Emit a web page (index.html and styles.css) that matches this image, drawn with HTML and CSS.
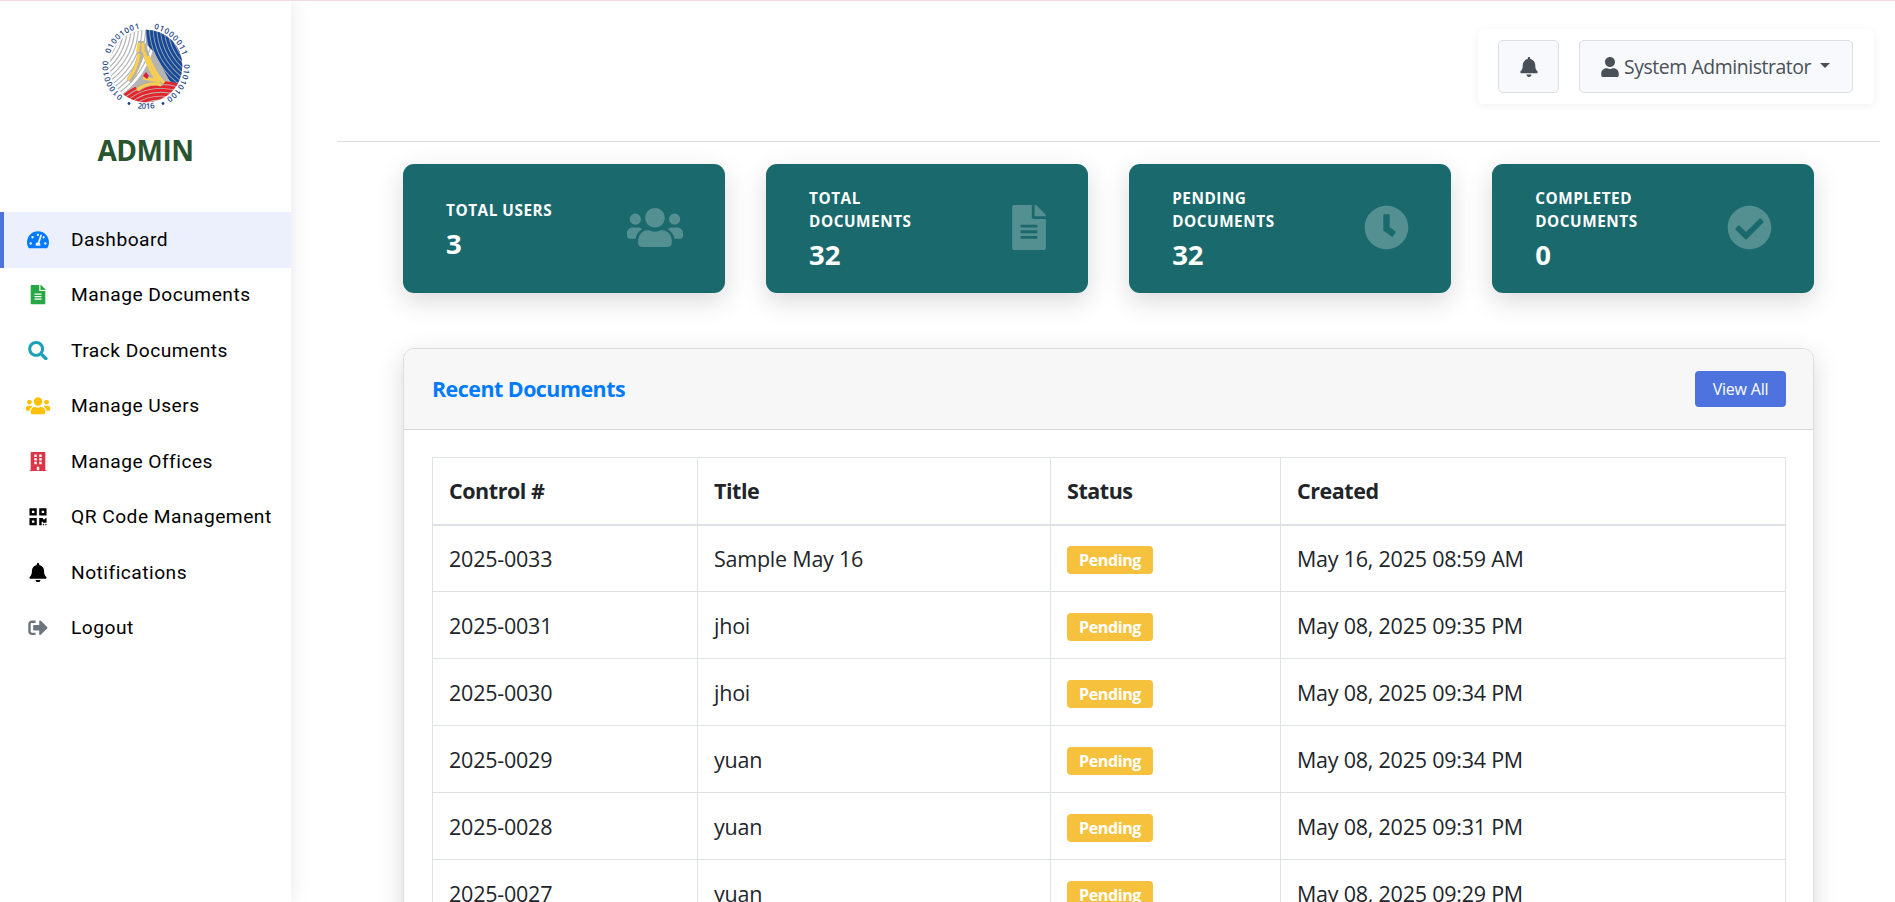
FILE: index.html
```html
<!DOCTYPE html>
<html lang="en">
<head>
<meta charset="utf-8">
<title>Admin Dashboard</title>
<link rel="stylesheet" href="styles.css">
</head>
<body>
<svg class="sprite" aria-hidden="true">
  <symbol id="i-dash" viewBox="0 0 576 512"><path d="M288 32C128.94 32 0 160.94 0 320c0 52.8 14.25 102.26 39.06 144.8 5.61 9.62 16.3 15.2 27.44 15.2h443c11.14 0 21.83-5.58 27.44-15.2C561.75 422.26 576 372.8 576 320c0-159.06-128.94-288-288-288zm0 64c14.71 0 26.58 10.13 30.32 23.65-1.11 2.26-2.64 4.23-3.45 6.67l-9.22 27.67c-5.13 3.49-10.97 6.01-17.64 6.01-17.67 0-32-14.33-32-32S270.33 96 288 96zM96 384c-17.67 0-32-14.33-32-32s14.33-32 32-32 32 14.33 32 32-14.33 32-32 32zm48-160c-17.67 0-32-14.33-32-32s14.33-32 32-32 32 14.33 32 32-14.33 32-32 32zm246.77-72.41l-61.33 184C343.13 347.33 352 364.54 352 384c0 11.72-3.38 22.55-8.88 32H232.88c-5.5-9.45-8.88-20.28-8.88-32 0-33.94 26.5-61.43 59.9-63.59l61.34-184.01c4.17-12.56 17.73-19.45 30.36-15.17 12.57 4.19 19.35 17.79 15.17 30.36zm14.66 57.2l15.52-46.55c3.47-1.29 7.13-2.23 11.05-2.23 17.67 0 32 14.33 32 32s-14.33 32-32 32c-11.38-.01-20.89-6.28-26.57-15.22zM480 384c-17.67 0-32-14.33-32-32s14.33-32 32-32 32 14.33 32 32-14.33 32-32 32z"/></symbol>
  <symbol id="i-file" viewBox="0 0 384 512"><path d="M224 136V0H24C10.7 0 0 10.7 0 24v464c0 13.3 10.7 24 24 24h336c13.3 0 24-10.7 24-24V160H248c-13.2 0-24-10.8-24-24zm64 236c0 6.6-5.4 12-12 12H108c-6.6 0-12-5.4-12-12v-8c0-6.6 5.4-12 12-12h168c6.6 0 12 5.4 12 12v8zm0-64c0 6.6-5.4 12-12 12H108c-6.6 0-12-5.4-12-12v-8c0-6.6 5.4-12 12-12h168c6.6 0 12 5.4 12 12v8zm0-72v8c0 6.6-5.4 12-12 12H108c-6.6 0-12-5.4-12-12v-8c0-6.6 5.4-12 12-12h168c6.6 0 12 5.4 12 12zm96-114.1v6.1H256V0h6.1c6.4 0 12.5 2.5 17 7l97.9 98c4.5 4.5 7 10.6 7 16.9z"/></symbol>
  <symbol id="i-search" viewBox="0 0 512 512"><path d="M505 442.7L405.3 343c-4.5-4.5-10.6-7-17-7H372c27.6-35.3 44-79.7 44-128C416 93.1 322.9 0 208 0S0 93.1 0 208s93.1 208 208 208c48.3 0 92.7-16.4 128-44v16.3c0 6.4 2.5 12.5 7 17l99.7 99.7c9.4 9.4 24.6 9.4 33.9 0l28.3-28.3c9.4-9.4 9.4-24.6.1-34zM208 336c-70.7 0-128-57.2-128-128 0-70.7 57.2-128 128-128 70.7 0 128 57.2 128 128 0 70.7-57.2 128-128 128z"/></symbol>
  <symbol id="i-users" viewBox="0 0 640 512"><path d="M96 224c35.3 0 64-28.7 64-64s-28.7-64-64-64-64 28.7-64 64 28.7 64 64 64zm448 0c35.3 0 64-28.7 64-64s-28.7-64-64-64-64 28.7-64 64 28.7 64 64 64zm32 32h-64c-17.6 0-33.5 7.1-45.1 18.6 40.3 22.1 68.9 62 75.1 109.4h66c17.7 0 32-14.3 32-32v-32c0-35.3-28.7-64-64-64zm-256 0c61.9 0 112-50.1 112-112S381.9 32 320 32 208 82.1 208 144s50.1 112 112 112zm76.8 32h-8.3c-20.8 10-43.9 16-68.5 16s-47.6-6-68.5-16h-8.3C179.6 288 128 339.6 128 403.2V432c0 26.5 21.5 48 48 48h288c26.5 0 48-21.5 48-48v-28.8c0-63.6-51.6-115.2-115.2-115.2zm-223.7-13.4C161.5 263.1 145.6 256 128 256H64c-35.3 0-64 28.7-64 64v32c0 17.7 14.3 32 32 32h65.9c6.3-47.4 34.9-87.3 75.2-109.4z"/></symbol>
  <symbol id="i-building" viewBox="0 0 448 512"><path fill-rule="evenodd" d="M436 480h-20V24c0-13.3-10.7-24-24-24H56C42.7 0 32 10.7 32 24v456H12c-6.6 0-12 5.4-12 12v20h448v-20c0-6.6-5.4-12-12-12zM128 64h64v64h-64zM256 64h64v64h-64zM128 160h64v64h-64zM256 160h64v64h-64zM128 256h64v64h-64zM256 256h64v64h-64zM192 384h64v96h-64z"/></symbol>
  <symbol id="i-qr" viewBox="0 0 448 512"><path d="M0 224h192V32H0v192zM64 96h64v64H64V96zm192-64v192h192V32H256zm128 128h-64V96h64v64zM0 480h192V288H0v192zm64-128h64v64H64v-64zm352-64h32v128h-96v-32h-32v96h-64V288h96v32h64v-32zm0 160h32v32h-32v-32zm-64 0h32v32h-32v-32z"/></symbol>
  <symbol id="i-bell" viewBox="0 0 448 512"><path d="M224 512c35.32 0 63.97-28.65 63.97-64H160.03c0 35.35 28.65 64 63.97 64zm215.39-149.71c-19.32-20.76-55.47-51.99-55.47-154.29 0-77.7-54.48-139.9-127.94-155.16V32c0-17.67-14.32-32-31.98-32s-31.98 14.33-31.98 32v20.84C118.56 68.1 64.08 130.3 64.08 208c0 102.3-36.15 133.53-55.47 154.29-6 6.45-8.66 14.16-8.61 21.71.11 16.4 12.98 32 32.1 32h383.8c19.12 0 32-15.6 32.1-32 .05-7.55-2.61-15.27-8.61-21.71z"/></symbol>
  <symbol id="i-out" viewBox="0 0 512 512"><path d="M497 273L329 441c-15 15-41 4.5-41-17v-96H152c-13.3 0-24-10.7-24-24v-96c0-13.3 10.7-24 24-24h136V88c0-21.4 25.9-32 41-17l168 168c9.3 9.4 9.3 24.6 0 34zM192 436v-40c0-6.6-5.4-12-12-12H96c-17.7 0-32-14.3-32-32V160c0-17.7 14.3-32 32-32h84c6.6 0 12-5.4 12-12V76c0-6.6-5.4-12-12-12H96c-53 0-96 43-96 96v192c0 53 43 96 96 96h84c6.6 0 12-5.4 12-12z"/></symbol>
  <symbol id="i-user" viewBox="0 0 448 512"><path d="M224 256c70.7 0 128-57.3 128-128S294.7 0 224 0 96 57.3 96 128s57.3 128 128 128zm89.6 32h-16.7c-22.2 10.2-46.9 16-72.9 16s-50.6-5.8-72.9-16h-16.7C60.2 288 0 348.2 0 422.4V464c0 26.5 21.5 48 48 48h352c26.5 0 48-21.5 48-48v-41.6c0-74.2-60.2-134.4-134.4-134.4z"/></symbol>
  <symbol id="i-clock" viewBox="0 0 512 512"><path d="M256 8C119 8 8 119 8 256s111 248 248 248 248-111 248-248S393 8 256 8zm57.1 350.1L224.9 294c-3.1-2.3-4.9-5.9-4.9-9.7V116c0-6.6 5.4-12 12-12h48c6.6 0 12 5.4 12 12v137.7l63.5 46.2c5.4 3.9 6.5 11.4 2.6 16.8l-28.2 38.8c-3.9 5.3-11.4 6.5-16.8 2.6z"/></symbol>
  <symbol id="i-check" viewBox="0 0 512 512"><path d="M504 256c0 136.967-111.033 248-248 248S8 392.967 8 256 119.033 8 256 8s248 111.033 248 248zM227.314 387.314l184-184c6.248-6.248 6.248-16.379 0-22.627l-22.627-22.627c-6.248-6.249-16.379-6.249-22.628 0L216 308.118l-70.059-70.059c-6.248-6.248-16.379-6.248-22.628 0l-22.627 22.627c-6.248 6.248-6.248 16.379 0 22.627l104 104c6.249 6.249 16.379 6.249 22.628.001z"/></symbol>
</svg>

<div class="app">
  <aside class="sidebar">
    <div class="brand">
      <svg class="logo" viewBox="-45 -45 90 90">
        <defs>
          <clipPath id="disc"><circle r="36.3"/></clipPath>
          <clipPath id="blueArea"><path d="M0-40V-22L8-14 27 21 45 20V-45H0z"/></clipPath>
          <clipPath id="redArea"><circle cx="15" cy="75" r="60"/></clipPath>
          <path id="ring" d="M0 38A38 38 0 0 1 0-38A38 38 0 0 1 0 38"/>
          <path id="ringUnder" d="M-43 0A43 43 0 0 0 43 0"/>
        </defs>
        <g clip-path="url(#disc)">
          <circle r="37" fill="#b4b4b4"/>
          <g class="arcs arcs-white">
            <circle cx="-75" cy="-40" r="73"/><circle cx="-75" cy="-40" r="69.3"/><circle cx="-75" cy="-40" r="65.6"/><circle cx="-75" cy="-40" r="61.9"/><circle cx="-75" cy="-40" r="58.2"/><circle cx="-75" cy="-40" r="54.5"/><circle cx="-75" cy="-40" r="50.8"/><circle cx="-75" cy="-40" r="47.1"/><circle cx="-75" cy="-40" r="43.4"/><circle cx="-75" cy="-40" r="76.7"/><circle cx="-75" cy="-40" r="80.4"/><circle cx="-75" cy="-40" r="84.1"/>
          </g>
          <g clip-path="url(#blueArea)">
            <rect x="-1" y="-40" width="50" height="70" fill="#9aa5b5"/>
            <g class="arcs arcs-blue">
              <circle cx="75" cy="-40" r="73.5"/><circle cx="75" cy="-40" r="69.8"/><circle cx="75" cy="-40" r="66.1"/><circle cx="75" cy="-40" r="62.4"/><circle cx="75" cy="-40" r="58.7"/><circle cx="75" cy="-40" r="55"/><circle cx="75" cy="-40" r="51.3"/><circle cx="75" cy="-40" r="47.6"/><circle cx="75" cy="-40" r="43.9"/>
            </g>
          </g>
          <g clip-path="url(#redArea)">
            <circle cx="15" cy="75" r="60" fill="#c4b5b5"/>
            <g class="arcs arcs-red">
              <circle cx="15" cy="75" r="58.5"/><circle cx="15" cy="75" r="54.6"/><circle cx="15" cy="75" r="50.7"/><circle cx="15" cy="75" r="46.8"/><circle cx="15" cy="75" r="42.9"/><circle cx="15" cy="75" r="39"/>
            </g>
          </g>
          <path class="star-edge" d="M-5-25V-14Q-8 2-17 15M-3-22Q4 6 17 18M17 17Q4 14-9 23"/>
          <path class="star" d="M-7-23L-8.500-14M-3-23V-14M-7-12Q-9 3-18 14M-2-14Q3 5 13 16M2-10Q9 8 18 17M15 19Q3 15-9 24M-3 12L14 15"/>
          <path d="M-3 10L0 6L3 10L1 13z" fill="#e0203c"/>
        </g>
        <g class="ring-text">
          <text><textPath href="#ring" startOffset="24.500" textLength="40">01000100</textPath></text>
          <text><textPath href="#ring" startOffset="72" textLength="41">01001001</textPath></text>
          <text><textPath href="#ring" startOffset="127" textLength="41">01000011</textPath></text>
          <text><textPath href="#ring" startOffset="177" textLength="40">01010100</textPath></text>
          <text text-anchor="middle"><textPath href="#ringUnder" startOffset="50%">2016</textPath></text>
        </g>
        <circle cx="-17" cy="37.5" r="1.4" fill="#1c4587"/><circle cx="17" cy="37.5" r="1.4" fill="#1c4587"/>
      </svg>
      <h1 class="brand-name">ADMIN</h1>
    </div>
    <nav class="nav">
      <a class="nav-item active"><svg class="icon blue"><use href="#i-dash"/></svg><span>Dashboard</span></a>
      <a class="nav-item"><svg class="icon green"><use href="#i-file"/></svg><span>Manage Documents</span></a>
      <a class="nav-item"><svg class="icon cyan"><use href="#i-search"/></svg><span>Track Documents</span></a>
      <a class="nav-item"><svg class="icon yellow"><use href="#i-users"/></svg><span>Manage Users</span></a>
      <a class="nav-item"><svg class="icon red"><use href="#i-building"/></svg><span>Manage Offices</span></a>
      <a class="nav-item"><svg class="icon"><use href="#i-qr"/></svg><span>QR Code Management</span></a>
      <a class="nav-item"><svg class="icon"><use href="#i-bell"/></svg><span>Notifications</span></a>
      <a class="nav-item"><svg class="icon gray"><use href="#i-out"/></svg><span>Logout</span></a>
    </nav>
  </aside>

  <main class="main">
    <header class="topbar">
      <div class="toolbar">
        <button class="tool bell"><svg class="tool-icon"><use href="#i-bell"/></svg></button>
        <button class="tool account"><svg class="tool-icon"><use href="#i-user"/></svg><span class="account-name">System Administrator</span><i class="caret"></i></button>
      </div>
    </header>

    <div class="content">
      <section class="stats">
        <div class="stat"><div class="stat-text"><div class="stat-label">TOTAL USERS</div><div class="stat-value">3</div></div><svg class="stat-icon wide"><use href="#i-users"/></svg></div>
        <div class="stat"><div class="stat-text"><div class="stat-label">TOTAL<br>DOCUMENTS</div><div class="stat-value">32</div></div><svg class="stat-icon narrow"><use href="#i-file"/></svg></div>
        <div class="stat"><div class="stat-text"><div class="stat-label">PENDING<br>DOCUMENTS</div><div class="stat-value">32</div></div><svg class="stat-icon"><use href="#i-clock"/></svg></div>
        <div class="stat"><div class="stat-text"><div class="stat-label">COMPLETED<br>DOCUMENTS</div><div class="stat-value">0</div></div><svg class="stat-icon"><use href="#i-check"/></svg></div>
      </section>

      <section class="panel">
        <div class="panel-head"><h2 class="panel-title">Recent Documents</h2><a class="view-all"><span>View All</span></a></div>
        <div class="panel-body">
          <table class="docs">
            <colgroup><col class="c1"><col class="c2"><col class="c3"><col></colgroup>
            <thead><tr><th>Control #</th><th>Title</th><th>Status</th><th>Created</th></tr></thead>
            <tbody>
              <tr><td>2025-0033</td><td>Sample May 16</td><td><span class="badge">Pending</span></td><td>May 16, 2025 08:59 AM</td></tr>
              <tr><td>2025-0031</td><td>jhoi</td><td><span class="badge">Pending</span></td><td>May 08, 2025 09:35 PM</td></tr>
              <tr><td>2025-0030</td><td>jhoi</td><td><span class="badge">Pending</span></td><td>May 08, 2025 09:34 PM</td></tr>
              <tr><td>2025-0029</td><td>yuan</td><td><span class="badge">Pending</span></td><td>May 08, 2025 09:34 PM</td></tr>
              <tr><td>2025-0028</td><td>yuan</td><td><span class="badge">Pending</span></td><td>May 08, 2025 09:31 PM</td></tr>
              <tr><td>2025-0027</td><td>yuan</td><td><span class="badge">Pending</span></td><td>May 08, 2025 09:29 PM</td></tr>
            </tbody>
          </table>
        </div>
      </section>
    </div>
  </main>
</div>
</body>
</html>
```

FILE: styles.css
```css
* { box-sizing: border-box; }
html { height: 902px; overflow: hidden; }
body {
  margin: 0;
  height: 902px;
  overflow: hidden;
  border-top: 1px solid #f5dbe0;
  background: #fff;
  color: #212529;
  font-family: "Open Sans", "Noto Sans", sans-serif;
  font-size: 21.5px;
}
h1, h2 { margin: 0; }
svg { fill: currentColor; display: block; flex: none; }
.sprite { display: none; }
.app { display: flex; height: 901px; overflow: hidden; }

/* Sidebar */
.sidebar {
  width: 291px;
  flex: none;
  background: #fff;
  box-shadow: 0 0 18px rgba(0, 0, 0, .1);
}
.brand {
  height: 211px;
  padding-top: 20px;
  display: flex;
  flex-direction: column;
  align-items: center;
}
.logo { width: 90px; height: 90px; overflow: visible; }
.arcs circle { fill: none; stroke-width: 2.5; }
.arcs-white circle { stroke: #fff; }
.arcs-blue circle { stroke: #174a96; stroke-width: 2.8; }
.arcs-red circle { stroke: #e3262d; stroke-width: 3; }
.star-edge { fill: none; stroke: #b5b1a4; stroke-width: 6; }
.star { fill: none; stroke: #f8cf50; stroke-width: 3; }
.ring-text text { font: 600 7.8px "Open Sans", sans-serif; fill: #1c4587; }
.brand-name {
  margin-top: 19px;
  font-size: 28px;
  line-height: 40px;
  font-weight: 700;
  letter-spacing: -.5px;
  color: #285430;
}
.nav-item {
  display: flex;
  align-items: center;
  height: 55.5px;
  padding: 0 0 1px 22px;
  color: #000;
  font: 400 19.2px Roboto, sans-serif;
  letter-spacing: .48px;
  white-space: nowrap;
}
.nav-item span { padding-left: 17px; }
.nav-item.active { padding-left: 18px; border-left: 4px solid #4e73df; background: #ebf0fc; }
.icon { width: 32px; height: 19.5px; }
.blue { color: #007bff; }
.green { color: #28a745; }
.cyan { color: #17a2b8; }
.yellow { color: #ffc107; }
.red { color: #dc3545; }
.gray { color: #6c757d; }

/* Top bar */
.main { flex: 1; min-width: 0; padding: 0 15px 0 46px; }
.topbar {
  height: 141px;
  padding: 28px 6px 0 0;
  border-bottom: 1px solid #dcdfe1;
  display: flex;
  justify-content: flex-end;
  align-items: flex-start;
}
.toolbar {
  display: flex;
  gap: 20px;
  padding: 11px 21px 11px 20px;
  height: 75px;
  border-radius: 6px;
  box-shadow: 0 2px 8px rgba(0, 0, 0, .06);
}
.tool {
  height: 53px;
  display: flex;
  align-items: center;
  border: 1px solid #dadfe4;
  border-radius: 5px;
  background: #f8f9fc;
  color: #495057;
  font: 400 19.4px "Open Sans", sans-serif;
  white-space: nowrap;
}
.bell { width: 61px; padding: 0; justify-content: center; }
.account { width: 274px; padding: 0 0 0 21px; }
.tool-icon { width: 18px; height: 20px; }
.account-name { margin: 0 9px 0 5px; letter-spacing: -.42px; }
.caret { border: 5px solid transparent; border-top-color: #495057; border-bottom: 0; margin-top: -3px; }

/* Statistics */
.content { padding: 22px 66px 0 66px; }
.stats { display: grid; grid-template-columns: repeat(4, 1fr); gap: 41.3px; }
.stat {
  height: 129px;
  padding: 0 42px 0 43px;
  display: flex;
  align-items: center;
  justify-content: space-between;
  border-radius: 11px;
  background: #1a696c;
  color: #fff;
  box-shadow: 0 8px 26px rgba(0, 0, 0, .15);
}
.stat-text { padding-top: 4px; }
.stat-label { font-size: 15.3px; line-height: 23px; font-weight: 700; letter-spacing: .55px; }
.stat-value { margin-top: 3px; font-size: 27.5px; line-height: 38px; height: 38px; font-weight: 700; }
.stat-icon { width: 45px; height: 45px; margin-bottom: 2px; opacity: .25; }
.stat-icon.wide { width: 56px; }
.stat-icon.narrow { width: 34px; }

/* Recent documents */
.panel {
  margin-top: 55px;
  border: 1px solid #dcdddf;
  border-radius: 11px;
  background: #fff;
  box-shadow: 0 8px 26px rgba(0, 0, 0, .15);
}
.panel-head {
  height: 81px;
  padding: 0 27px 1px 28px;
  display: flex;
  align-items: center;
  justify-content: space-between;
  background: #f7f7f7;
  border-bottom: 1px solid #d8d9da;
  border-radius: 10px 10px 0 0;
}
.panel-title { font-size: 21.4px; font-weight: 700; letter-spacing: -.5px; color: #007bff; }
.view-all {
  width: 91px;
  height: 36px;
  display: flex;
  align-items: center;
  justify-content: center;
  border-radius: 4px;
  background: #4e73df;
  color: #fff;
  font-size: 16px;
  letter-spacing: -.2px;
}
.panel-body { padding: 27px 27px 27px 28px; }
.docs { width: 100%; table-layout: fixed; border-collapse: collapse; }
.c1 { width: 265px; }
.c2 { width: 353px; }
.c3 { width: 230px; }
.docs th, .docs td {
  height: 67px;
  padding: 0 17px 0 16px;
  border: 1px solid #dee2e6;
  text-align: left;
  vertical-align: middle;
  white-space: nowrap;
  letter-spacing: -.23px;
}
.docs th { height: 67px; border-bottom-width: 2px; letter-spacing: -.45px; }
.badge {
  display: inline-flex;
  align-items: center;
  justify-content: center;
  width: 86px;
  height: 28px;
  border-radius: 4px;
  background: #f6c23e;
  color: #fff;
  font-size: 16px;
  font-weight: 700;
  letter-spacing: -.4px;
  vertical-align: middle;
}
```
